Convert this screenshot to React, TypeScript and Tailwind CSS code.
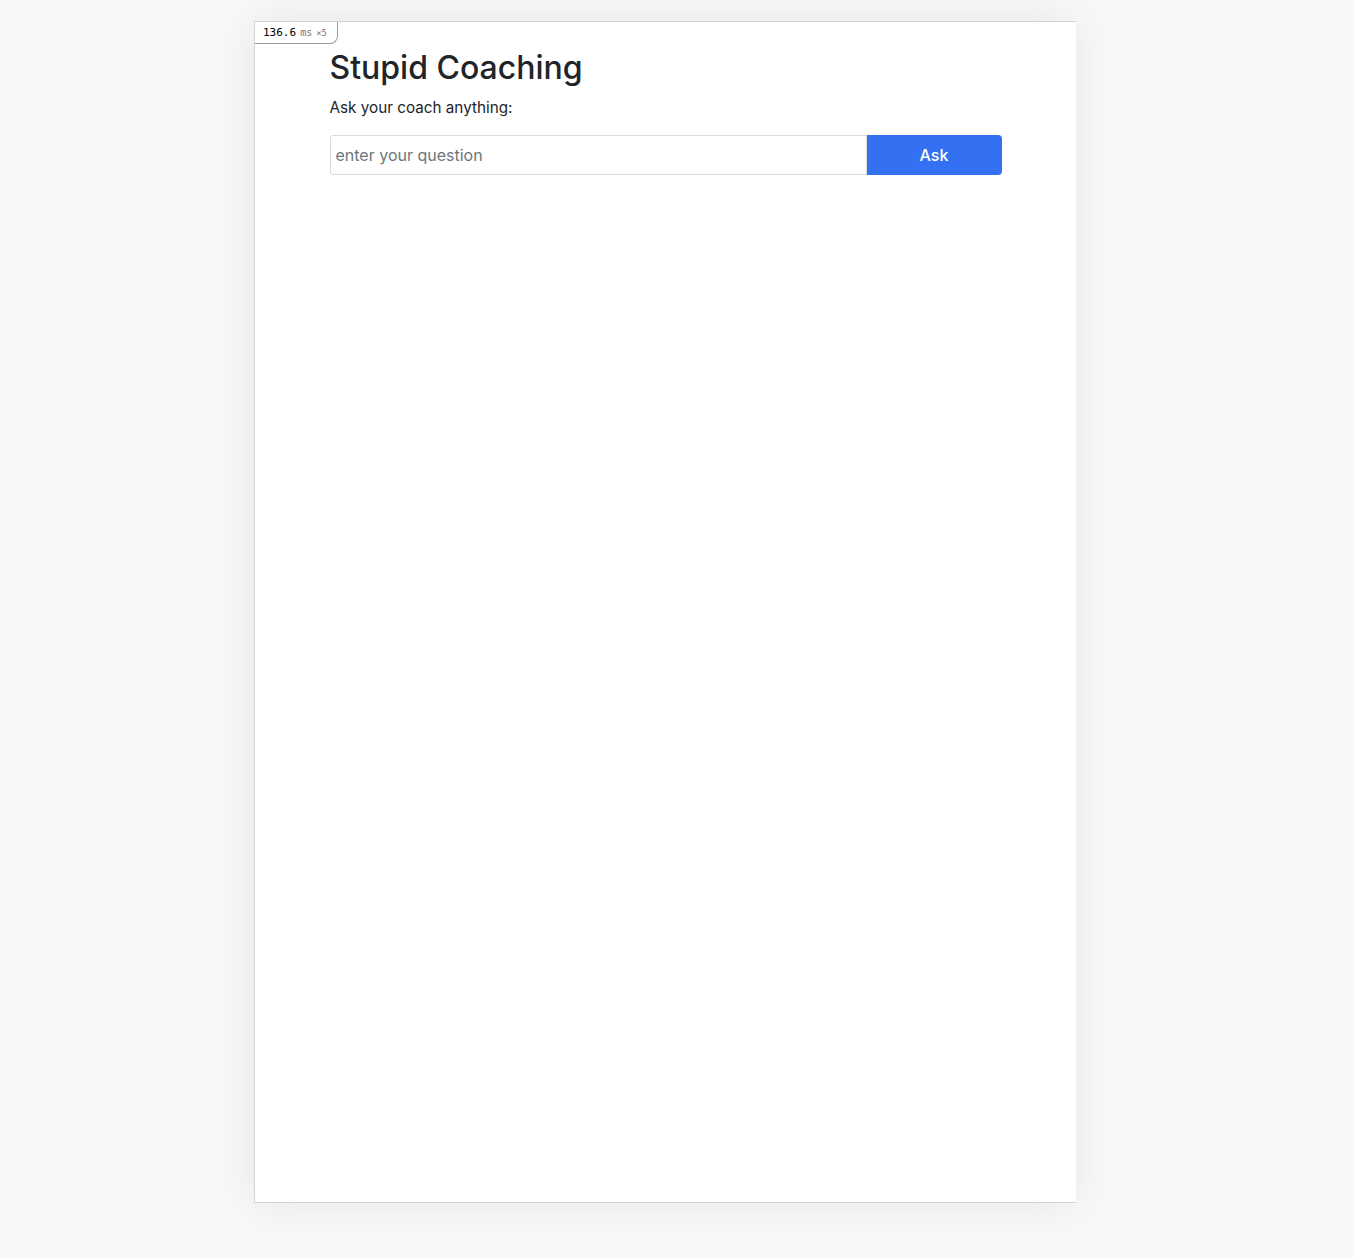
import React, { useState } from "react";

function TimingBadge() {
  return (
    <div className="absolute left-0 top-0 flex items-baseline gap-1 rounded-br-lg border-b border-r border-[#9a9a9a] bg-white pl-2 pr-[10px] py-[5px] font-['DejaVu_Sans_Mono',monospace] leading-none">
      <span className="text-[11px] text-black">136.6</span>
      <span className="text-[10px] text-[#777]">ms</span>
      <span className="text-[9px] text-[#777]">×5</span>
    </div>
  );
}

export default function App() {
  const [question, setQuestion] = useState("");

  return (
    <div className="min-h-[1258px] bg-[#f8f8f8] pt-[21px] font-['Inter',sans-serif]">
      <div className="relative ml-[254px] h-[1182px] w-[822px] border-b border-l border-t border-[#d4d4d4] bg-white shadow-[0_0_40px_rgba(0,0,0,0.08)]">
        <TimingBadge />
        <div className="mx-auto max-w-2xl pt-[27px]">
          <h1 className="text-[32px] font-medium leading-[1.2] text-[#212529]">
            Stupid Coaching
          </h1>
          <p className="mt-[10px] text-[15.25px] text-[#212529]">
            Ask your coach anything:
          </p>
          <form
            className="mt-[15px] flex"
            onSubmit={(e) => e.preventDefault()}
          >
            <input
              value={question}
              onChange={(e) => setQuestion(e.target.value)}
              placeholder="enter your question"
              className="h-10 flex-1 rounded-l-[3px] border border-[#dadada] px-[5px] text-[16px] text-[#212529] outline-none placeholder:text-[#6c757d]"
            />
            <button
              type="submit"
              className="h-10 w-[135px] rounded-r-[4px] bg-[#3371f2] text-[16px] font-medium text-white"
            >
              Ask
            </button>
          </form>
        </div>
      </div>
    </div>
  );
}
